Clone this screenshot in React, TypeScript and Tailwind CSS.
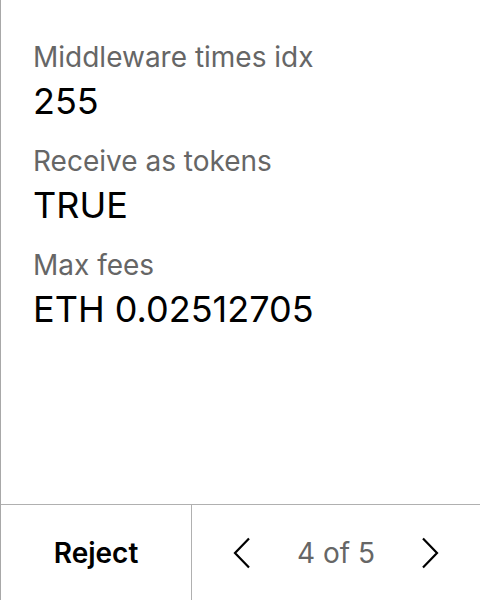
import React from "react";

const items = [
  { label: "Middleware times idx", value: "255" },
  { label: "Receive as tokens", value: "TRUE" },
  { label: "Max fees", value: "ETH 0.02512705" },
];

export default function App() {
  return (
    <div
      className="w-[480px] h-[600px] flex flex-col bg-white border-l border-[#a8a8a8]"
      style={{ fontFamily: "Inter, 'Noto Sans', sans-serif" }}
    >
      <div className="flex-1 flex flex-col gap-[23px] pl-8 pt-[40px]">
        {items.map((it) => (
          <div key={it.label} className="flex flex-col gap-[7px]">
            <div className="text-[28px] leading-[34px] text-[#666666]">{it.label}</div>
            <div className="text-[36px] leading-[40px] text-black">{it.value}</div>
          </div>
        ))}
      </div>
      <div className="h-[96px] flex border-t border-[#b0b0b0]">
        <div className="w-[191px] flex items-center justify-center border-r border-[#b0b0b0]">
          <span className="text-[28px] font-semibold text-black">Reject</span>
        </div>
        <div className="flex-1 flex items-center justify-center gap-[46px]">
          <svg width="18" height="32" viewBox="0 0 18 32" fill="none">
            <path d="M16 1.5 L2 16 L16 30.5" stroke="black" strokeWidth="2.2" />
          </svg>
          <span className="text-[28px] text-[#666666]">4 of 5</span>
          <svg width="18" height="32" viewBox="0 0 18 32" fill="none">
            <path d="M2 1.5 L16 16 L2 30.5" stroke="black" strokeWidth="2.2" />
          </svg>
        </div>
      </div>
    </div>
  );
}
